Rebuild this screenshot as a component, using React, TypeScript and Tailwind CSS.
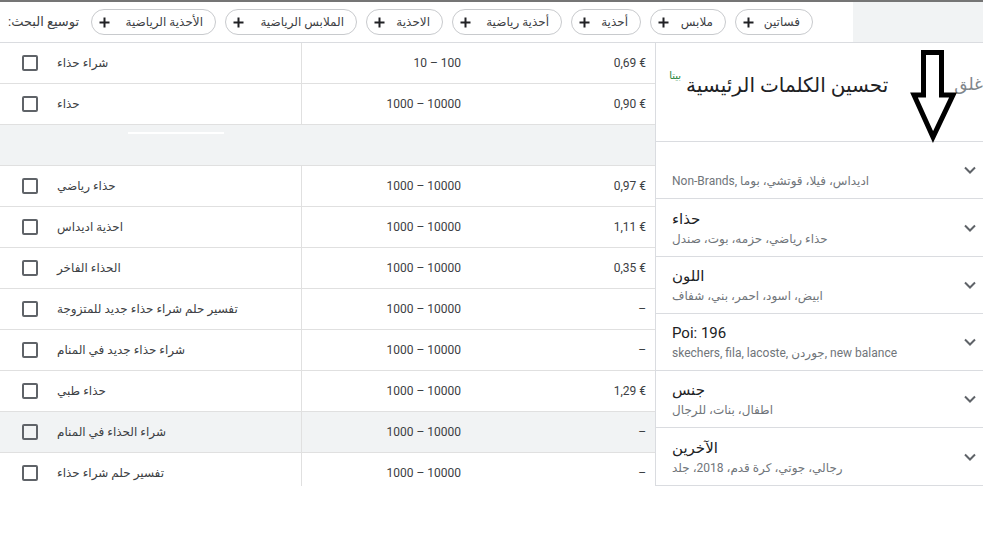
import React from 'react'

type Row = { kw: string; range: string; bid: string; hl?: boolean; gap?: boolean }

const CHIPS: Array<{ label: string; w: string }> = [
  { label: 'فساتين', w: 'w-[78px]' },
  { label: 'ملابس', w: 'w-[76px]' },
  { label: 'أحذية', w: 'w-[70px]' },
  { label: 'أحذية رياضية', w: 'w-[110px]' },
  { label: 'الاحذية', w: 'w-[77px]' },
  { label: 'الملابس الرياضية', w: 'w-[132px]' },
  { label: 'الأحذية الرياضية', w: 'w-[125px]' },
]

const ROWS: Row[] = [
  { kw: 'شراء حذاء', range: '10 – 100', bid: '0,69 €' },
  { kw: 'حذاء', range: '1000 – 10000', bid: '0,90 €' },
  { kw: '', range: '', bid: '', gap: true },
  { kw: 'حذاء رياضي', range: '1000 – 10000', bid: '0,97 €' },
  { kw: 'احذية اديداس', range: '1000 – 10000', bid: '1,11 €' },
  { kw: 'الحذاء الفاخر', range: '1000 – 10000', bid: '0,35 €' },
  { kw: 'تفسير حلم شراء حذاء جديد للمتزوجة', range: '1000 – 10000', bid: '–' },
  { kw: 'شراء حذاء جديد في المنام', range: '1000 – 10000', bid: '–' },
  { kw: 'حذاء طبي', range: '1000 – 10000', bid: '1,29 €' },
  { kw: 'شراء الحذاء في المنام', range: '1000 – 10000', bid: '–', hl: true },
  { kw: 'تفسير حلم شراء حذاء', range: '1000 – 10000', bid: '–' },
]

const GROUPS: Array<{ title: string; sub: string; h: string }> = [
  { title: '', sub: 'Non-Brands, اديداس، فيلا، قوتشي، بوما', h: 'h-[57px]' },
  { title: 'حذاء', sub: 'حذاء رياضي، حزمه، بوت، صندل', h: 'h-[58px]' },
  { title: 'اللون', sub: 'ابيض، اسود، احمر، بني، شفاف', h: 'h-[57px]' },
  { title: 'Poi: 196', sub: 'skechers, fila, lacoste, جوردن, new balance', h: 'h-[57px]' },
  { title: 'جنس', sub: 'اطفال، بنات، للرجال', h: 'h-[57px]' },
  { title: 'الآخرين', sub: 'رجالي، جوتي، كرة قدم، 2018، جلد', h: 'h-[58px]' },
]

function PlusIcon() {
  return (
    <svg width="11" height="11" viewBox="0 0 11 11">
      <path d="M5.5 0.5v10M0.5 5.5h10" stroke="#202124" strokeWidth="2" />
    </svg>
  )
}

function Chevron() {
  return (
    <svg width="12" height="8" viewBox="0 0 12 8">
      <path d="M1 1.5l5 5 5-5" stroke="#5f6368" strokeWidth="2" fill="none" />
    </svg>
  )
}

export default function App() {
  return (
    <div className="w-[983px] h-[551px] bg-white overflow-hidden font-['Roboto','DejaVu_Sans',sans-serif] text-[#3c4043]">
      {/* expand search bar */}
      <div className="flex h-[43px] border-t-2 border-b border-t-[#757575] border-b-[#dadce0]">
        <div dir="rtl" className="w-[853px] flex items-center gap-[9px] pr-[40px] pl-2">
          {CHIPS.map(c => (
            <div
              key={c.label}
              className={`${c.w} h-[26px] shrink-0 flex items-center justify-between rounded-full border border-[#c8cacd] pr-[12px] pl-[7px] text-[12px] text-[#3c4043]`}
            >
              <span className="whitespace-nowrap">{c.label}</span>
              <PlusIcon />
            </div>
          ))}
          <span className="mr-auto text-[13px] text-[#3c4043] whitespace-nowrap">توسيع البحث:</span>
        </div>
        <div className="flex-1 bg-[#f1f3f4]" />
      </div>

      <div className="flex h-[443px] overflow-hidden">
        {/* keyword table */}
        <div className="w-[655px] shrink-0">
          {ROWS.map((r, i) =>
            r.gap ? (
              <div key={i} className="h-[41px] pt-[7px] bg-[#f1f3f4] border-b border-[#e0e0e0]">
                <div className="ml-[128px] w-[96px] h-[2px] bg-white" />
              </div>
            ) : (
              <div
                key={i}
                className={`h-[41px] flex border-b border-[#e0e0e0] text-[12px] ${r.hl ? 'bg-[#f1f3f4]' : 'bg-white'}`}
              >
                <div className="w-[302px] shrink-0 flex items-center border-r border-[#e0e0e0]">
                  <div className="ml-[22px] w-4 h-4 rounded-[2px] border-2 border-[#5f6368]" />
                  <span className="ml-[19px] whitespace-nowrap">{r.kw}</span>
                </div>
                <div className="w-[159px] shrink-0 flex items-center justify-end whitespace-nowrap">{r.range}</div>
                <div className="flex-1 flex items-center justify-end pr-[9px] whitespace-nowrap">{r.bid}</div>
              </div>
            )
          )}
        </div>

        {/* refine keywords panel */}
        <div className="flex-1 relative border-l border-[#dadce0]">
          <div className="h-[99px] pt-[28px] border-b border-[#dadce0]">
            <div dir="rtl" className="flex items-center h-[28px]">
              <span className="text-[17px] text-[#80868b] whitespace-nowrap">غلق</span>
              <span className="mr-[66px] text-[20px] text-[#202124] whitespace-nowrap">تحسين الكلمات الرئيسية</span>
              <span className="self-start mr-[5px] -mt-[3px] text-[10px] text-[#188038]">بيتا</span>
            </div>
          </div>
          {GROUPS.map((g, i) => (
            <div key={i} className={`${g.h} flex items-center justify-between border-b border-[#dadce0] pl-4 pr-[7px]`}>
              <div className="pt-[1px]">
                <div className="h-[20px] text-[15px] leading-[20px] text-[#202124]">{g.title}</div>
                <div className="text-[12px] leading-[17px] mt-[2px] text-[#70757a] whitespace-nowrap">{g.sub}</div>
              </div>
              <Chevron />
            </div>
          ))}
          <svg className="absolute left-[250px] top-[2px]" width="55" height="100" viewBox="0 0 55 100">
            <polygon
              points="17.5,7.5 35.5,7.5 35.5,50 47,50 27,92 8,50 17.5,50"
              fill="none"
              stroke="#000"
              strokeWidth="5"
              strokeLinejoin="miter"
            />
          </svg>
        </div>
      </div>
    </div>
  )
}
